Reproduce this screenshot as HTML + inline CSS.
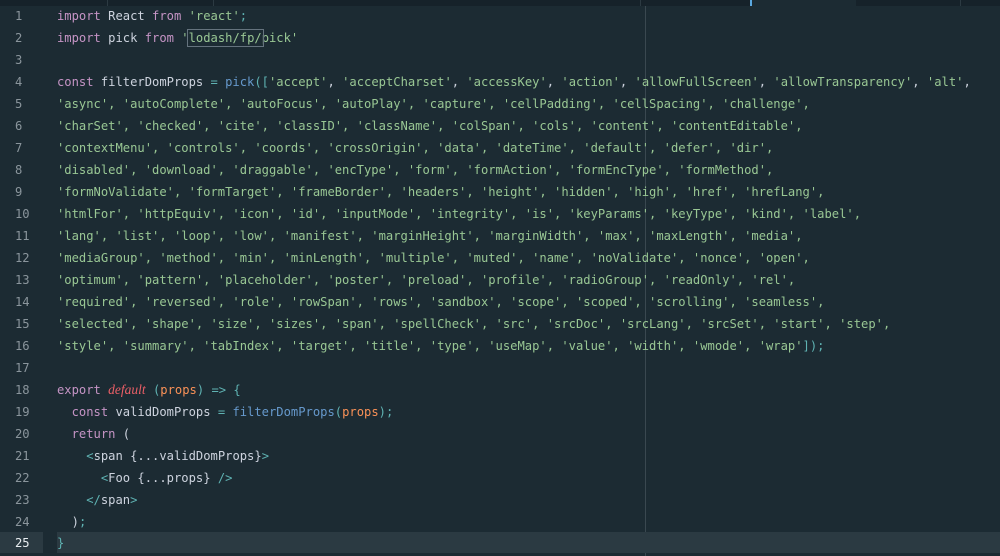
<!DOCTYPE html><html><head><style>
body{margin:0;width:1000px;height:556px;background:#1c2b33;overflow:hidden;font-family:"DejaVu Sans Mono","Liberation Mono",monospace;font-size:12.15px;}
.tabs{position:absolute;top:0;left:0;width:1000px;height:6px;background:#16222a;}
.tabs .a{position:absolute;left:750px;width:104px;height:6px;background:#1c2b33;border-left:2px solid #5aa8e0;}
.tabs i{position:absolute;top:0;width:1px;height:6px;background:#2c3a42}
.ruler{position:absolute;left:645px;top:6px;width:1px;height:550px;background:#3a4850;}
.l{position:absolute;left:0;height:22px;line-height:22px;width:1000px;white-space:pre;color:#cdd3de;}
.n{position:absolute;left:15px;color:#8a959c;}
.c{position:absolute;left:57px;}
.hl{background:#2b3a42;}
.k{color:#c594c5}.s{color:#99c794}.f{color:#6699cc}.d{color:#ec5f67;font-style:italic;font-family:"Liberation Serif",serif;font-size:13.5px}.p{color:#f99157}.t{color:#5fb3b3}
</style></head><body>
<div class="tabs"><i style="left:107px"></i><i style="left:213px"></i><i style="left:640px"></i><div class="a"></div><i style="left:960px"></i></div>
<div class="ruler"></div>
<div class="l" style="top:5px"><span class="n">1</span><span class="c"><span class="k">import</span> React <span class="k">from</span> <span class="s">'react'</span><span class="t">;</span></span></div>
<div class="l" style="top:27px"><span class="n">2</span><span class="c"><span class="k">import</span> pick <span class="k">from</span> <span class="s">'<span style="outline:1px solid #65737e;outline-offset:1px">lodash/fp/</span>pick'</span></span></div>
<div class="l" style="top:49px"><span class="n">3</span></div>
<div class="l" style="top:71px"><span class="n">4</span><span class="c"><span class="k">const</span> filterDomProps <span class="t">=</span> <span class="f">pick</span><span class="t">([</span><span class="s">'accept'</span>, <span class="s">'acceptCharset'</span>, <span class="s">'accessKey'</span>, <span class="s">'action'</span>, <span class="s">'allowFullScreen'</span>, <span class="s">'allowTransparency'</span>, <span class="s">'alt'</span>,</span></div>
<div class="l s" style="top:93px"><span class="n">5</span><span class="c">'async', 'autoComplete', 'autoFocus', 'autoPlay', 'capture', 'cellPadding', 'cellSpacing', 'challenge',</span></div>
<div class="l s" style="top:115px"><span class="n">6</span><span class="c">'charSet', 'checked', 'cite', 'classID', 'className', 'colSpan', 'cols', 'content', 'contentEditable',</span></div>
<div class="l s" style="top:137px"><span class="n">7</span><span class="c">'contextMenu', 'controls', 'coords', 'crossOrigin', 'data', 'dateTime', 'default', 'defer', 'dir',</span></div>
<div class="l s" style="top:159px"><span class="n">8</span><span class="c">'disabled', 'download', 'draggable', 'encType', 'form', 'formAction', 'formEncType', 'formMethod',</span></div>
<div class="l s" style="top:181px"><span class="n">9</span><span class="c">'formNoValidate', 'formTarget', 'frameBorder', 'headers', 'height', 'hidden', 'high', 'href', 'hrefLang',</span></div>
<div class="l s" style="top:203px"><span class="n">10</span><span class="c">'htmlFor', 'httpEquiv', 'icon', 'id', 'inputMode', 'integrity', 'is', 'keyParams', 'keyType', 'kind', 'label',</span></div>
<div class="l s" style="top:225px"><span class="n">11</span><span class="c">'lang', 'list', 'loop', 'low', 'manifest', 'marginHeight', 'marginWidth', 'max', 'maxLength', 'media',</span></div>
<div class="l s" style="top:247px"><span class="n">12</span><span class="c">'mediaGroup', 'method', 'min', 'minLength', 'multiple', 'muted', 'name', 'noValidate', 'nonce', 'open',</span></div>
<div class="l s" style="top:269px"><span class="n">13</span><span class="c">'optimum', 'pattern', 'placeholder', 'poster', 'preload', 'profile', 'radioGroup', 'readOnly', 'rel',</span></div>
<div class="l s" style="top:291px"><span class="n">14</span><span class="c">'required', 'reversed', 'role', 'rowSpan', 'rows', 'sandbox', 'scope', 'scoped', 'scrolling', 'seamless',</span></div>
<div class="l s" style="top:313px"><span class="n">15</span><span class="c">'selected', 'shape', 'size', 'sizes', 'span', 'spellCheck', 'src', 'srcDoc', 'srcLang', 'srcSet', 'start', 'step',</span></div>
<div class="l s" style="top:335px"><span class="n">16</span><span class="c">'style', 'summary', 'tabIndex', 'target', 'title', 'type', 'useMap', 'value', 'width', 'wmode', 'wrap'<span class="t">]);</span></span></div>
<div class="l" style="top:357px"><span class="n">17</span></div>
<div class="l" style="top:379px"><span class="n">18</span><span class="c"><span class="k">export</span> <span class="d">default</span> <span class="t">(</span><span class="p">props</span><span class="t">) =&gt; {</span></span></div>
<div class="l" style="top:401px"><span class="n">19</span><span class="c">  <span class="k">const</span> validDomProps <span class="t">=</span> <span class="f">filterDomProps</span><span class="t">(</span><span class="p">props</span><span class="t">);</span></span></div>
<div class="l" style="top:423px"><span class="n">20</span><span class="c">  <span class="k">return</span> (</span></div>
<div class="l" style="top:445px"><span class="n">21</span><span class="c">    <span class="t">&lt;</span>span {...validDomProps}<span class="t">&gt;</span></span></div>
<div class="l" style="top:467px"><span class="n">22</span><span class="c">      <span class="t">&lt;</span>Foo {...props} <span class="t">/&gt;</span></span></div>
<div class="l" style="top:489px"><span class="n">23</span><span class="c">    <span class="t">&lt;/</span>span<span class="t">&gt;</span></span></div>
<div class="l" style="top:511px"><span class="n">24</span><span class="c">  )<span class="t">;</span></span></div>
<div style="position:absolute;left:0;top:532px;width:43px;height:21px;background:#2b3a42"></div>
<div style="position:absolute;left:57px;top:532px;width:943px;height:21px;background:#2b3a42"></div>
<div class="l" style="top:532px"><span class="n" style="color:#e8edf0">25</span><span class="c"><span class="t">}</span></span></div>
</body></html>
